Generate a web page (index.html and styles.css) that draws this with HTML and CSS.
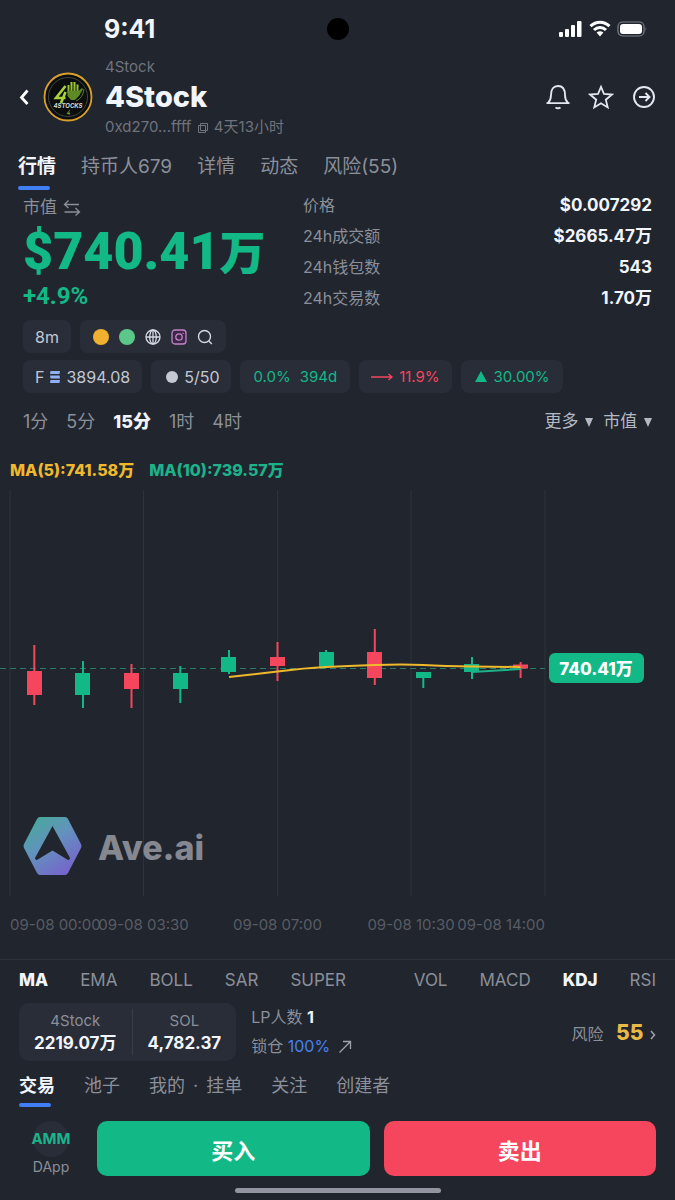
FILE: index.html
```html
<!DOCTYPE html>
<html lang="zh-CN">
<head>
    <meta charset="UTF-8">
    <meta name="viewport" content="width=device-width, initial-scale=1.0">
    <title>4Stock - Ave.ai</title>
    <link rel="stylesheet" href="styles.css">
</head>
<body>
    <div class="status-bar">
        <span class="time">9:41</span>
        <span class="camera"></span>
        <div class="status-icons">
            <svg width="24" height="18" viewBox="0 0 24 18" fill="#fff">
                <rect x="0" y="12" width="4" height="5" rx="1"/>
                <rect x="6" y="9" width="4" height="8" rx="1"/>
                <rect x="12" y="5" width="4" height="12" rx="1"/>
                <rect x="18" y="1" width="4.500" height="16" rx="1"/>
            </svg>
            <svg width="22" height="18" viewBox="0 0 22 18" fill="none" stroke="#fff" stroke-width="3">
                <path d="M1.500 6.200C7 .9 15 .9 20.500 6.200"/>
                <path d="M5 10C8.500 6.700 13.500 6.700 17 10"/>
                <path d="M7.600 12.600Q11 9.800 14.400 12.600L11 16.400z" fill="#fff" stroke="none"/>
            </svg>
            <svg width="30" height="18" viewBox="0 0 30 18">
                <rect x="1" y="2" width="26" height="14" rx="4.500" fill="none" stroke="#7d8189" stroke-width="1.200"/>
                <rect x="3" y="4" width="22" height="10" rx="3" fill="#fff"/>
                <path d="M28.500 7q1.500 2 0 4z" fill="#7d8189"/>
            </svg>
        </div>
    </div>

    <header class="header">
        <button class="icon-btn back" aria-label="返回">
            <svg width="10" height="18" viewBox="0 0 10 18" fill="none" stroke="#fff" stroke-width="2.800"><path d="M8.500 2.500L2.500 9.500l6 6.500"/></svg>
        </button>
        <svg class="avatar" width="50" height="50" viewBox="0 0 50 50">
            <defs>
                <linearGradient id="lime" gradientUnits="userSpaceOnUse" x1="0" y1="9" x2="0" y2="31">
                    <stop offset="0" stop-color="#a9d238"/>
                    <stop offset="1" stop-color="#5b8f1c"/>
                </linearGradient>
            </defs>
            <circle cx="25" cy="25" r="23.500" fill="#0b0d0e" stroke="#d9a02c" stroke-width="1.800"/>
            <circle cx="25" cy="25" r="19.500" fill="none" stroke="#3d473f" stroke-width="1"/>
            <path d="M22.500 14L13 26h9.500M22.500 20L18 31" fill="none" stroke="#a9d238" stroke-width="2.600"/>
            <path d="M25.500 13v8M28.500 10v10M31.500 10v10M34.500 12.500v8" stroke="url(#lime)" stroke-width="2"/>
            <path d="M24.500 19h11l3.500-3 1 1-4 7-4 4h-4l-3.500-4z" fill="#5d8a22"/>
            <path d="M41 17q-1 9-8 12" fill="none" stroke="#5e7b2c" stroke-width="1"/>
            <text x="25" y="36" class="avatar-text">4STOCKS</text>
            <path d="M27 38l-3 3.500h3M26 40v3" fill="none" stroke="#79aa2a" stroke-width=".8"/>
        </svg>
        <div class="token">
            <span class="sub">4Stock</span>
            <h1>4Stock</h1>
            <span class="sub">0xd270...ffff
                <svg width="12" height="12" viewBox="0 0 12 12" fill="none" stroke="#6f737c"><path d="M3.500 1.500h7v7h-7zM1.500 3.500h7v7h-7z"/></svg>
                4天13小时</span>
        </div>
        <div class="header-actions">
            <button class="icon-btn" aria-label="提醒">
                <svg width="26" height="26" viewBox="0 0 26 26" fill="none" stroke="#e4e8f2" stroke-width="1.800"><path d="M1.500 19.200h23M3 19q3-3 3-8C6 5 8.500 2 13 2s7 3 7 9q0 5 3 8"/><path d="M10.500 23.500q2.500 1.500 5 0" stroke-width="2"/></svg>
            </button>
            <button class="icon-btn" aria-label="收藏">
                <svg width="26" height="26" viewBox="0 0 26 26" fill="none" stroke="#e4e8f2" stroke-width="1.800"><path d="M13 2.800l3 7.200 7.800.6-6 5.100 1.900 7.700-6.700-4.200-6.700 4.200 1.900-7.700-6-5.100L10 10z"/></svg>
            </button>
            <button class="icon-btn" aria-label="分享">
                <svg width="26" height="26" viewBox="0 0 26 26" fill="none" stroke="#e4e8f2" stroke-width="1.900"><circle cx="13" cy="13" r="10"/><path d="M8 13h10M14.500 9l4 4-4 4"/></svg>
            </button>
        </div>
    </header>

    <nav class="tabs">
        <a href="#" class="active">行情</a>
        <a href="#">持币人679</a>
        <a href="#">详情</a>
        <a href="#">动态</a>
        <a href="#">风险(55)</a>
    </nav>

    <section class="overview">
        <div class="market">
            <div class="market-label">市值
                <svg width="18" height="18" viewBox="0 0 18 18" fill="none" stroke="#8b8f99" stroke-width="1.300"><path d="M5.500 1.500L1.500 5.500l4 3.500M1.500 5.500H16M12.500 9l4 4-4 3.500M1.500 13H16"/></svg>
            </div>
            <div class="market-value">$740.41<span>万</span></div>
            <div class="market-change">+4.9%</div>
        </div>
        <dl class="stats">
            <div><dt>价格</dt><dd>$0.007292</dd></div>
            <div><dt>24h成交额</dt><dd>$2665.47万</dd></div>
            <div><dt>24h钱包数</dt><dd>543</dd></div>
            <div><dt>24h交易数</dt><dd>1.70万</dd></div>
        </dl>
    </section>

    <section class="badges">
        <div class="badge-row">
            <span class="badge">8m</span>
            <span class="badge links">
                <i class="dot orange"></i>
                <i class="dot green"></i>
                <svg width="16" height="16" viewBox="0 0 16 16" fill="none" stroke="#d3d8e2" stroke-width="1.300"><circle cx="8" cy="8" r="7"/><ellipse cx="8" cy="8" rx="3.300" ry="7"/><path d="M1 8h14M8 1v14"/></svg>
                <svg width="16" height="16" viewBox="0 0 16 16" fill="none" stroke="#c583c8" stroke-width="1.300"><rect x="1" y="1" width="14" height="14" rx="3" fill="#3a2746"/><circle cx="8" cy="8" r="3.200"/><path d="M11.500 4.300h1.200"/></svg>
                <svg width="16" height="16" viewBox="0 0 16 16" fill="none" stroke="#d3d8e2" stroke-width="1.400"><circle cx="7.500" cy="7.500" r="6"/><path d="M11.800 12l3 3"/></svg>
            </span>
        </div>
        <div class="badge-row">
            <span class="badge">F
                <svg width="10" height="12" viewBox="0 0 10 12" fill="#8fb0f7"><path d="M.5 0H10L9.500 3H0zM0 4.500h9.500l.5 3H.5zM.5 9H10l-.5 3H0z"/></svg>
                3894.08</span>
            <span class="badge"><i class="dot small"></i>5/50</span>
            <span class="badge up wide">0.0%<span>394d</span></span>
            <span class="badge down">
                <svg width="22" height="8" viewBox="0 0 22 8" fill="none" stroke="#f6465d" stroke-width="1.300"><path d="M0 4h21M17.500 1l3.500 3-3.500 3"/></svg>
                11.9%</span>
            <span class="badge up">
                <svg width="14" height="12" viewBox="0 0 14 12" fill="#12b886"><path d="M7 0l6 11H1z"/></svg>
                30.00%</span>
        </div>
    </section>

    <div class="periods">
        <button>1分</button>
        <button>5分</button>
        <button class="active">15分</button>
        <button>1时</button>
        <button>4时</button>
        <div class="menus">
            <button>更多 <i class="caret"></i></button>
            <button>市值 <i class="caret"></i></button>
        </div>
    </div>

    <section class="chart">
        <div class="legend">
            <span class="ma5">MA(5):741.58万</span>
            <span class="ma10">MA(10):739.57万</span>
        </div>
        <svg class="candles" viewBox="0 0 675 469">
            <defs>
                <linearGradient id="logo" x1="0" y1="0" x2="0.7" y2="1">
                    <stop offset="0.1" stop-color="#48a99b"/>
                    <stop offset="0.5" stop-color="#6292bd"/>
                    <stop offset="1" stop-color="#7665cb"/>
                </linearGradient>
            </defs>
            <path class="grid" d="M10 0v406M143.500 0v406M277.500 0v406M411 0v406M545 0v406"/>
            <path class="price-line" d="M0 178.500h545"/>
            <g class="red">
                <path d="M34.300 155v60M131.500 174v44M277.500 152v39M374.800 139v56M520.600 172v16"/>
                <path class="body" d="M27 181h15v24H27zM124 183h15v16H124zM270 167h15v9H270zM367 162h15v26H367zM513 174.500h15v4H513z"/>
            </g>
            <g class="green">
                <path d="M83 171v47M180.300 176v37M229 160v24M326 160v17M423.300 182v16M472 167v22"/>
                <path class="body" d="M75 183h15v22H75zM173 183h15v16H173zM221 167h15v15H221zM319 162h15v15H319zM416 182h15v6H416zM464 174h15v8H464z"/>
            </g>
            <path class="line5" d="M229 187L277.500 181.500Q305 178 326 177T374.800 175T423.300 175T472 176.500L520.600 177"/>
            <path class="line10" d="M472 182L520.600 179"/>
            <g>
                <rect x="549" y="163" width="95" height="30" rx="6" fill="#12b886"/>
                <text class="tag" x="596" y="185">740.41万</text>
            </g>
            <path fill="url(#logo)" fill-rule="evenodd" d="M40 327h25q2 0 3 2l13 25q1 2 0 4L68 383q-1 2-3 2H40q-2 0-3-2L24 358q-1-2 0-4l13-25q1-2 3-2zM52.500 336L35 368q0 2 2 2l15.500-9.500L68 370q2 0 2-2z"/>
            <text class="watermark" x="98" y="370">Ave.ai</text>
            <g class="axis">
                <text x="10" y="440">09-08 00:00</text>
                <text x="143.500" y="440" text-anchor="middle">09-08 03:30</text>
                <text x="277.500" y="440" text-anchor="middle">09-08 07:00</text>
                <text x="411" y="440" text-anchor="middle">09-08 10:30</text>
                <text x="545" y="440" text-anchor="end">09-08 14:00</text>
            </g>
        </svg>
    </section>

    <div class="indicators">
        <div class="indicator-group">
            <button class="active">MA</button>
            <button>EMA</button>
            <button>BOLL</button>
            <button>SAR</button>
            <button>SUPER</button>
        </div>
        <div class="indicator-group">
            <button>VOL</button>
            <button>MACD</button>
            <button class="active">KDJ</button>
            <button>RSI</button>
        </div>
    </div>

    <section class="pool">
        <div class="pool-box">
            <div><span>4Stock</span><strong>2219.07万</strong></div>
            <div><span>SOL</span><strong>4,782.37</strong></div>
        </div>
        <div class="pool-info">
            <div>LP人数 <strong>1</strong></div>
            <div>锁仓 <a href="#">100%</a>
                <svg width="14" height="14" viewBox="0 0 14 14" fill="none" stroke="#a0a4ad" stroke-width="1.300"><path d="M1.500 12.500l11-11M5 1.500h7.500V9"/></svg>
            </div>
        </div>
        <a href="#" class="risk">风险 <strong>55</strong>
            <svg width="6" height="10" viewBox="0 0 6 10" fill="none" stroke="#a0a4ad" stroke-width="1.500"><path d="M1 1l3.500 4L1 9"/></svg>
        </a>
    </section>

    <nav class="tabs bottom-tabs">
        <a href="#" class="active">交易</a>
        <a href="#">池子</a>
        <a href="#">我的<span class="sep">·</span>挂单</a>
        <a href="#">关注</a>
        <a href="#">创建者</a>
    </nav>

    <footer class="actions">
        <a href="#" class="dapp"><span class="amm">AMM</span>DApp</a>
        <button class="buy">买入</button>
        <button class="sell">卖出</button>
    </footer>
    <div class="home-bar"></div>
</body>
</html>
```

FILE: styles.css
```css
* {
    box-sizing: border-box;
}

body {
    margin: 0;
    background-color: #21252e;
    color: #f2f5fc;
    font-family: Inter, "Noto Sans CJK SC", sans-serif;
    font-size: 16px;
}

a {
    color: inherit;
    text-decoration: none;
}

button {
    padding: 0;
    border: none;
    background: none;
    color: inherit;
    font: inherit;
    cursor: pointer;
}

/* Status bar */
.status-bar {
    display: grid;
    grid-template-columns: 1fr 22px 1fr;
    align-items: center;
    height: 58px;
}

.time {
    padding-left: 104px;
    font-size: 25px;
    font-weight: 700;
}

.camera {
    width: 22px;
    height: 22px;
    border-radius: 50%;
    background-color: #000;
}

.status-icons {
    display: flex;
    justify-content: flex-end;
    gap: 6px;
    padding-right: 28px;
}

/* Header */
.header {
    display: flex;
    align-items: center;
    height: 78px;
    padding: 0 18px;
}

.icon-btn {
    display: flex;
}

.back {
    padding: 0 14px 0 1px;
}

.avatar-text {
    fill: #d5d9cf;
    font-size: 6px;
    font-style: italic;
    font-weight: 700;
    text-anchor: middle;
}

.token {
    margin-left: 12px;
}

.token h1 {
    margin: 0;
    font-size: 29px;
    font-weight: 800;
    line-height: 40px;
}

.sub {
    display: block;
    color: #6f737c;
    font-size: 15px;
    line-height: 20px;
}

.sub svg {
    margin: 0 1px;
    vertical-align: -2px;
}

.header-actions {
    display: flex;
    gap: 17px;
    margin-left: auto;
}

/* Tabs */
.tabs {
    display: flex;
    gap: 25px;
    height: 54px;
    padding: 11px 18px 0;
    color: #8b8f99;
    font-size: 19px;
    line-height: 40px;
}

.tabs a {
    position: relative;
}

.tabs .active {
    color: #f2f5fc;
    font-weight: 700;
}

.tabs .active::after {
    content: "";
    position: absolute;
    left: 0;
    bottom: 0;
    width: 32px;
    height: 4px;
    border-radius: 2px;
    background-color: #3f7ef5;
}

/* Overview */
.overview {
    display: grid;
    grid-template-columns: 280px 1fr;
    height: 120px;
    padding: 0 23px;
}

.market-label {
    color: #8b8f99;
    font-size: 17px;
    line-height: 34px;
}

.market-label svg {
    margin-left: 1px;
    vertical-align: -4px;
}

.market-value {
    color: #12b886;
    font-family: Roboto, "Noto Sans CJK SC", sans-serif;
    font-size: 52px;
    font-weight: 900;
    line-height: 56px;
}

.market-value span {
    font-size: 46px;
}

.market-change {
    color: #12b886;
    font-family: Roboto, sans-serif;
    font-size: 24px;
    font-weight: 700;
    line-height: 30px;
}

.stats {
    margin: 0;
}

.stats div {
    display: flex;
    justify-content: space-between;
    line-height: 31px;
}

.stats dt {
    color: #8b8f99;
}

.stats dd {
    margin: 0;
    font-size: 17px;
    font-weight: 700;
}

/* Badges */
.badges {
    display: grid;
    gap: 7px;
    padding: 10px 23px 0;
}

.badge-row {
    display: flex;
    gap: 9px;
}

.badge {
    display: flex;
    align-items: center;
    gap: 6px;
    height: 33px;
    padding: 0 12px;
    border-radius: 8px;
    background-color: #282d38;
    color: #c3c8d2;
}

.badge.links {
    gap: 10px;
    padding: 0 13px;
}

.dot {
    width: 16px;
    height: 16px;
    border-radius: 50%;
}

.dot.small {
    width: 12px;
    height: 12px;
    margin-left: 3px;
    background-color: #c3c8d2;
}

.orange {
    background-color: #f0b030;
}

.dot.green {
    background-color: #5bc88a;
}

.badge.up,
.badge.down {
    padding: 0 13px;
    color: #12b886;
    font-size: 15px;
}

.badge.down {
    padding: 0 12px;
    color: #f6465d;
}

.badge.wide {
    gap: 9px;
}

/* Periods */
.periods {
    display: flex;
    gap: 18px;
    height: 53px;
    padding: 0 23px;
    color: #8b8f99;
    font-size: 18px;
}

.periods .active {
    color: #f2f5fc;
    font-weight: 800;
}

.menus {
    display: flex;
    gap: 10px;
    margin-left: auto;
    color: #b4b9c4;
    font-size: 17px;
}

.caret {
    display: inline-block;
    margin-left: 2px;
    border: 4px solid transparent;
    border-top: 9px solid #b4b9c4;
    border-bottom: none;
}

/* Chart */
.legend {
    display: flex;
    gap: 15px;
    padding: 9px 10px 5px;
    font-size: 16px;
    font-weight: 800;
    line-height: 30px;
}

.ma5 {
    color: #efb92c;
}

.ma10 {
    color: #1cb38a;
}

.candles {
    display: block;
    width: 100%;
}

.grid {
    stroke: #2d323b;
}

.price-line {
    stroke: #2b7a65;
    stroke-dasharray: 6 4;
}

.red {
    fill: #f6465d;
    stroke: #f6465d;
    stroke-width: 2;
}

.green {
    fill: #12b886;
    stroke: #12b886;
    stroke-width: 2;
}

.body {
    stroke: none;
}

.line5,
.line10 {
    fill: none;
    stroke: #efb92c;
    stroke-width: 2;
}

.line10 {
    stroke: #1cb38a;
}

.tag {
    fill: #fff;
    font-size: 17px;
    font-weight: 800;
    text-anchor: middle;
}

.watermark {
    fill: #858890;
    font-size: 34px;
    font-weight: 800;
}

.axis {
    fill: #585c64;
    font-size: 15px;
}

/* Indicators */
.indicators {
    display: flex;
    justify-content: space-between;
    height: 40px;
    padding: 0 19px;
    border-top: 1px solid #2d323b;
    color: #8b8f99;
    font-size: 17px;
}

.indicator-group {
    display: flex;
    gap: 32px;
}

.indicators .active {
    color: #f2f5fc;
    font-weight: 800;
}

/* Pool */
.pool {
    display: flex;
    align-items: center;
    padding: 4px 19px 0;
    color: #8b8f99;
}

.pool strong {
    color: #f2f5fc;
}

.pool-box {
    display: flex;
    padding: 6px 0;
    border-radius: 10px;
    background-color: #282d38;
    text-align: center;
}

.pool-box div {
    display: grid;
    padding: 0 15px;
    line-height: 23px;
}

.pool-box div + div {
    border-left: 1px solid #383d48;
}

.pool-box span {
    font-size: 15px;
}

.pool-box strong {
    font-size: 17px;
}

.pool-info {
    margin-left: 15px;
    line-height: 29px;
}

.pool-info a {
    color: #4a80ee;
}

.pool-info svg {
    margin-left: 3px;
    vertical-align: -2px;
}

.risk {
    margin-left: auto;
}

.risk strong {
    margin: 0 2px 0 8px;
    color: #e9bb45;
    font-size: 21px;
    font-weight: 800;
}

/* Bottom */
.bottom-tabs {
    gap: 29px;
    height: 46px;
    padding: 5px 19px 0;
    font-size: 18px;
}

.sep {
    margin: 0 8px;
}

.actions {
    display: grid;
    grid-template-columns: 64px 1fr 1fr;
    gap: 14px;
    padding: 14px 19px 12px;
}

.dapp {
    display: grid;
    justify-items: center;
    color: #8b8f99;
    font-size: 14px;
    line-height: 18px;
}

.amm {
    display: flex;
    align-items: center;
    justify-content: center;
    width: 36px;
    height: 36px;
    border-radius: 50%;
    background-color: #282d38;
    color: #1cb38a;
    font-size: 15px;
    font-weight: 700;
}

.buy,
.sell {
    height: 55px;
    border-radius: 10px;
    background-color: #12b886;
    color: #fff;
    font-size: 22px;
    font-weight: 700;
}

.sell {
    background-color: #f6465d;
}

.home-bar {
    width: 206px;
    height: 5px;
    margin: 0 auto 7px;
    border-radius: 3px;
    background-color: #9295a0;
}
```
